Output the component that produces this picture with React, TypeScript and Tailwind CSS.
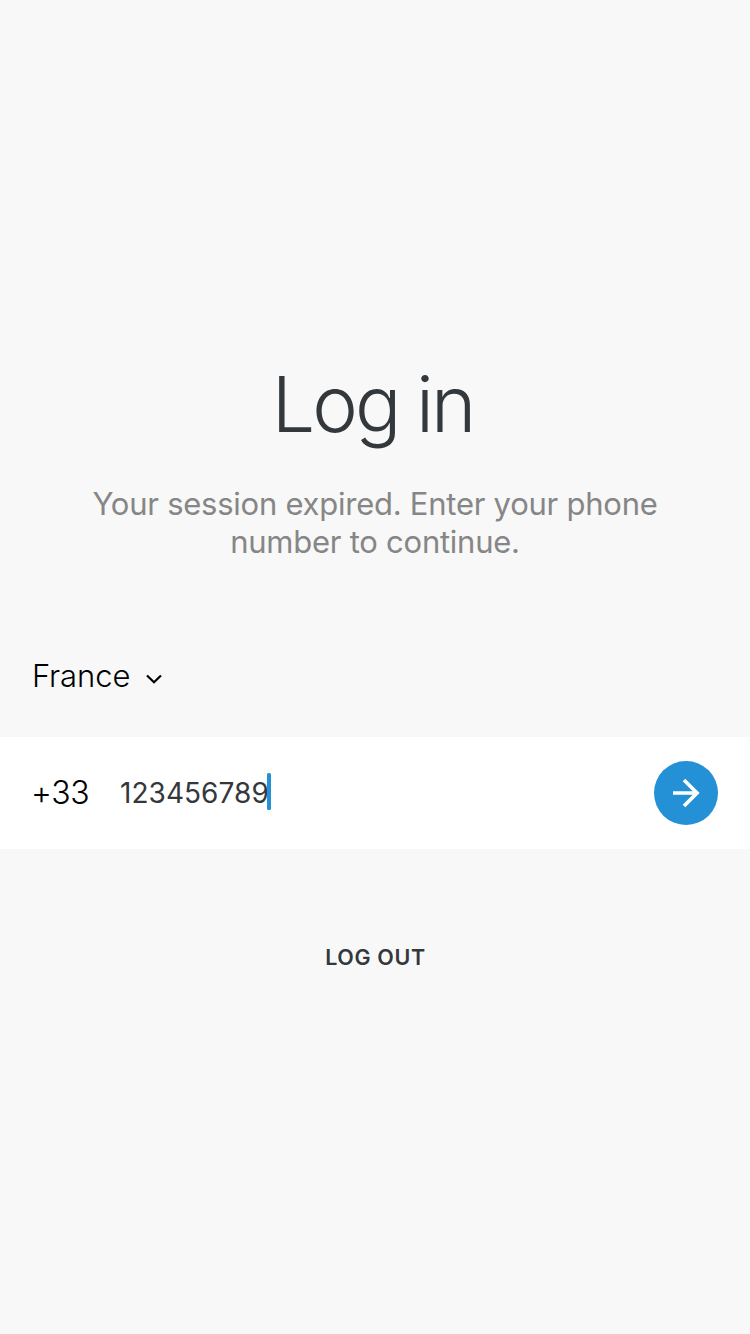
export default function App() {
  return (
    <main className="flex h-[1334px] w-[750px] flex-col overflow-hidden bg-[#f8f8f8] font-['Inter',sans-serif]">
      <h1 className="mt-[356px] pr-[5px] text-center text-[77px] leading-[96px] font-light tracking-[-3px] [word-spacing:-1px] text-[#33383c]">Log in</h1>
      <p className="mt-[33px] text-center text-[31px] leading-[38px] tracking-[-0.25px] text-[#868686]">
        Your session expired. Enter your phone
        <br />
        number to continue.
      </p>
      <button className="mt-[95px] ml-8 flex h-10 items-center gap-4 self-start text-[31px] leading-10 font-light tracking-[-0.1px] text-black">
        <span>France</span>
        <svg width="16" height="10" viewBox="0 0 16 10" fill="none" className="mt-1.5">
          <path d="M1 1.5L8 8.2L15 1.5" stroke="currentColor" strokeWidth="2.2" />
        </svg>
      </button>
      <div className="mt-[41px] flex h-28 items-center bg-white px-8">
        <span className="-ml-px w-[89px] text-[32px] font-light tracking-[-0.3px] text-black">+33</span>
        <span className="mb-px text-[28px] tracking-[0.05px] text-[#33383c]">123456789</span>
        <span className="-ml-[2px] mb-[3px] h-[37px] w-1 rounded-[1.5px] bg-[#2490d5]" />
        <button aria-label="Continue" className="ml-auto flex size-16 items-center justify-center rounded-full bg-[#2490d5]">
          <svg width="28" height="30" viewBox="0 0 28 30" fill="none">
            <path d="M1 15H25M12 2L25 15L12 28" stroke="white" strokeWidth="3.7" />
          </svg>
        </button>
      </div>
      <button className="mt-[93px] self-center pl-px text-[21.5px] leading-[30px] font-semibold tracking-[0.65px] text-[#33383c]">LOG OUT</button>
    </main>
  );
}
